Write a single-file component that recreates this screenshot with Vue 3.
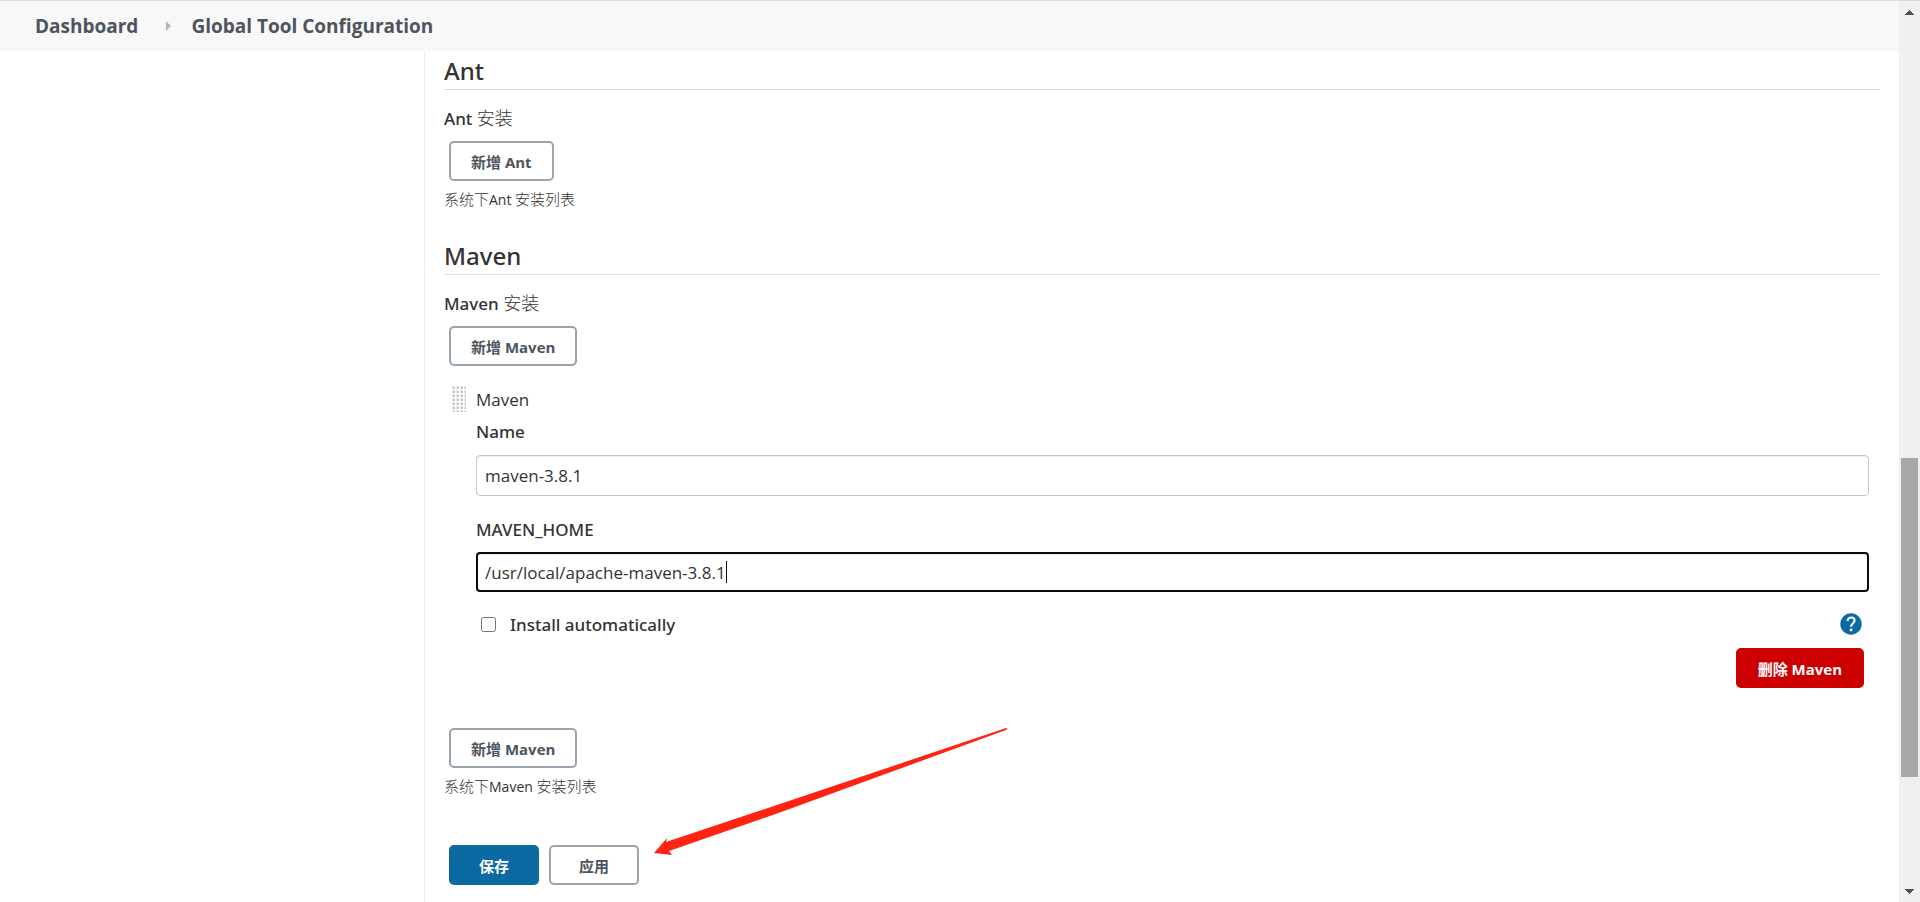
<script setup>
import { nextTick, onMounted, ref } from 'vue'

const name = ref('maven-3.8.1')
const home = ref('/usr/local/apache-maven-3.8.1')
const auto = ref(false)
const homeInput = ref(null)
const caretLeft = ref(0)

// Places the caret right after the last character of the field.
function placeCaret() {
  const style = getComputedStyle(homeInput.value)
  const ctx = document.createElement('canvas').getContext('2d')
  ctx.font = `${style.fontWeight} ${style.fontSize} ${style.fontFamily}`
  caretLeft.value = Math.round(
    parseFloat(style.borderLeftWidth) + parseFloat(style.paddingLeft) + ctx.measureText(home.value).width
  )
}

onMounted(async () => {
  await nextTick()
  await document.fonts.ready
  placeCaret()
})
</script>

<template>
  <div class="page">
    <div class="view">
      <nav class="breadcrumbs" aria-label="Breadcrumb">
        <a href="#">Dashboard</a>
        <svg class="sep" viewBox="0 0 5 10" aria-hidden="true"><path d="M0 0L5 5L0 10Z" fill="#b5b8bb" /></svg>
        <a href="#">Global Tool Configuration</a>
      </nav>
      <div class="body">
        <aside class="side"></aside>
        <main class="content">
          <section class="tool">
            <h2>Ant</h2>
            <p class="label">Ant <span class="han">安装</span></p>
            <button type="button" class="btn"><span class="han">新增</span> Ant</button>
            <p class="note"><span class="han">系统下</span>Ant <span class="han">安装列表</span></p>
          </section>

          <section class="tool">
            <h2>Maven</h2>
            <p class="label">Maven <span class="han">安装</span></p>
            <button type="button" class="btn"><span class="han">新增</span> Maven</button>
            <div class="item">
              <div class="grip-row">
                <svg class="grip" viewBox="0 0 14 26" aria-hidden="true">
                  <defs>
                    <pattern id="dots" width="4" height="4" patternUnits="userSpaceOnUse">
                      <rect width="3" height="3" fill="#e4e4e2" />
                      <rect x="1" y="1" width="2" height="2" fill="#c4c4c1" />
                    </pattern>
                  </defs>
                  <rect width="14" height="26" fill="url(#dots)" />
                </svg>
                <span>Maven</span>
              </div>
              <div class="fields">
                <label class="field-label" for="name">Name</label>
                <input id="name" v-model="name" class="text" type="text" />
                <label class="field-label second" for="home">MAVEN_HOME</label>
                <div class="caret-box">
                  <input id="home" ref="homeInput" v-model="home" class="text active" type="text" @input="placeCaret" />
                  <i class="caret" :style="{ left: caretLeft + 'px' }"></i>
                </div>
                <div class="check-row">
                  <input id="auto" v-model="auto" type="checkbox" />
                  <label for="auto">Install automatically</label>
                  <button type="button" class="help" aria-label="Help">
                    <svg viewBox="0 0 22 22">
                      <circle cx="11" cy="11" r="10.7" fill="#0b6aa2" />
                      <path d="M7.6 8.1C7.7 5.7 9 4.4 11.1 4.4C13.2 4.4 14.6 5.7 14.6 7.6C14.6 10.1 11.1 10.5 11.1 13.7" fill="none" stroke="#fff" stroke-width="2" />
                      <circle cx="11.1" cy="17" r="1.4" fill="#fff" />
                    </svg>
                  </button>
                </div>
                <div class="remove-row">
                  <button type="button" class="btn danger"><span class="han">删除</span> Maven</button>
                </div>
              </div>
            </div>
            <button type="button" class="btn"><span class="han">新增</span> Maven</button>
            <p class="note"><span class="han">系统下</span>Maven <span class="han">安装列表</span></p>
          </section>

          <div class="actions">
            <button type="button" class="btn primary"><span class="han">保存</span></button>
            <button type="button" class="btn wide"><span class="han">应用</span></button>
            <svg class="arrow" viewBox="0 0 354 130" aria-hidden="true">
              <path d="M0 126L13 111L12 115L120 79L352 1Q354 2 352 3L130 84L15 124L18 128Z" fill="#ff2312" />
            </svg>
          </div>
        </main>
      </div>
    </div>
    <div class="scrollbar" aria-hidden="true">
      <svg viewBox="0 0 9 5"><path d="M4 0h1v1h1v1h1v1h1v1h1v1h-9v-1h1v-1h1v-1h1v-1h1z" fill="#505050" /></svg>
      <div class="track"><div class="thumb"></div></div>
      <svg viewBox="0 0 9 5"><path d="M0 0h9v1h-1v1h-1v1h-1v1h-1v1h-1v-1h-1v-1h-1v-1h-1v-1h-1z" fill="#505050" /></svg>
    </div>
  </div>
</template>

<style>
body {
  margin: 0;
  background: #fff;
}
</style>

<style scoped>
.page {
  display: flex;
  height: 100vh;
  overflow: hidden;
  box-sizing: border-box;
  border-top: 1px solid #d9d9df;
  color: #333;
  font-family: "Open Sans", "Noto Sans CJK SC", sans-serif;
  font-size: 17px;
}
.view {
  flex: 1;
  min-width: 0;
  display: flex;
  flex-direction: column;
}
.breadcrumbs {
  display: flex;
  align-items: center;
  height: 50px;
  flex: none;
  padding-left: 35px;
  background: #f8f8f8;
  font-size: 19px;
  font-weight: 700;
}
.breadcrumbs a {
  color: #4d545d;
  text-decoration: none;
}
.sep {
  width: 5px;
  height: 10px;
  margin: 0 20px 0 28px;
}
.body {
  flex: 1;
  display: flex;
}
.side {
  width: 424px;
  flex: none;
}
.content {
  flex: 1;
  min-width: 0;
  padding: 0 19px;
  border-left: 1px solid #e6eef2;
}
.tool {
  display: flex;
  flex-direction: column;
  align-items: flex-start;
  margin-bottom: 23px;
}
h2 {
  align-self: stretch;
  margin: 0 0 14px;
  height: 38px;
  line-height: 40px;
  border-bottom: 1px solid #dedede;
  font-family: "Noto Sans", sans-serif;
  font-size: 24px;
  font-weight: 500;
}
.label {
  margin: 0 0 9px;
  line-height: 28px;
  height: 28px;
}
.label,
.field-label,
.check-row {
  font-family: "Noto Sans", "Noto Sans CJK SC", sans-serif;
  font-weight: 500;
}
.label .han {
  font-size: 18px;
  font-weight: 300;
}
.btn {
  box-sizing: border-box;
  height: 40px;
  margin: 0 5px;
  padding: 0 20px;
  border: 2px solid #98a5af;
  border-radius: 5px;
  background: #fff;
  color: #4d545d;
  font-family: inherit;
  font-size: 15px;
  font-weight: 700;
}
.note {
  margin: 4px 0 0;
  height: 28px;
  line-height: 28px;
  font-size: 14px;
}
.note .han {
  font-size: 15px;
  font-weight: 300;
}
.item {
  align-self: stretch;
  margin: 16px 0 40px;
}
.grip-row {
  display: flex;
  align-items: center;
  gap: 10px;
  height: 34px;
  padding-left: 8px;
}
.grip {
  width: 14px;
  height: 26px;
}
.fields {
  display: flex;
  flex-direction: column;
  padding: 0 11px 0 32px;
}
.field-label {
  height: 28px;
  line-height: 28px;
  margin: 2px 0 9px;
}
.second {
  margin: 20px 0 8px;
}
.text {
  box-sizing: border-box;
  width: 100%;
  height: 41px;
  padding: 0 8px;
  border: 1px solid #c6c6c6;
  border-radius: 4px;
  outline: none;
  box-shadow: inset 0 1px 1px #eee;
  background: #fff;
  color: #333;
  font-family: inherit;
  font-size: 17px;
}
.caret-box {
  position: relative;
  display: flex;
}
.active {
  height: 40px;
  padding: 0 7px;
  border: 2px solid #0a0a0a;
  caret-color: transparent;
}
.caret {
  position: absolute;
  top: 9px;
  width: 1px;
  height: 22px;
  background: #111;
}
.check-row {
  display: flex;
  align-items: center;
  height: 24px;
  margin: 20px 7px 12px 5px;
}
.check-row input {
  width: 15px;
  height: 15px;
  margin: 0 14px 0 0;
}
.help {
  width: 22px;
  height: 22px;
  margin-left: auto;
  padding: 0;
  border: 0;
  background: none;
}
.help svg {
  display: block;
}
.remove-row {
  display: flex;
  justify-content: flex-end;
}
.danger {
  border-color: #c00;
  background: #c00;
  color: #fff;
}
.actions {
  position: relative;
  display: flex;
  padding-top: 22px;
}
.primary,
.wide {
  padding: 0 28px;
}
.primary {
  border-color: #0b6aa2;
  background: #0b6aa2;
  color: #fff;
}
.arrow {
  position: absolute;
  left: 210px;
  bottom: 28px;
  width: 354px;
  height: 130px;
}
.scrollbar {
  display: flex;
  flex-direction: column;
  align-items: center;
  width: 21px;
  flex: none;
  padding: 9px 0 8px;
  box-sizing: border-box;
  background: #f0f0f0;
}
.scrollbar svg {
  width: 9px;
  height: 5px;
  flex: none;
}
.track {
  flex: 1;
  display: grid;
  grid-template-rows: 443fr 319fr 112fr;
  width: 17px;
}
.thumb {
  grid-row: 2;
  background: #a8a8a8;
}
</style>
